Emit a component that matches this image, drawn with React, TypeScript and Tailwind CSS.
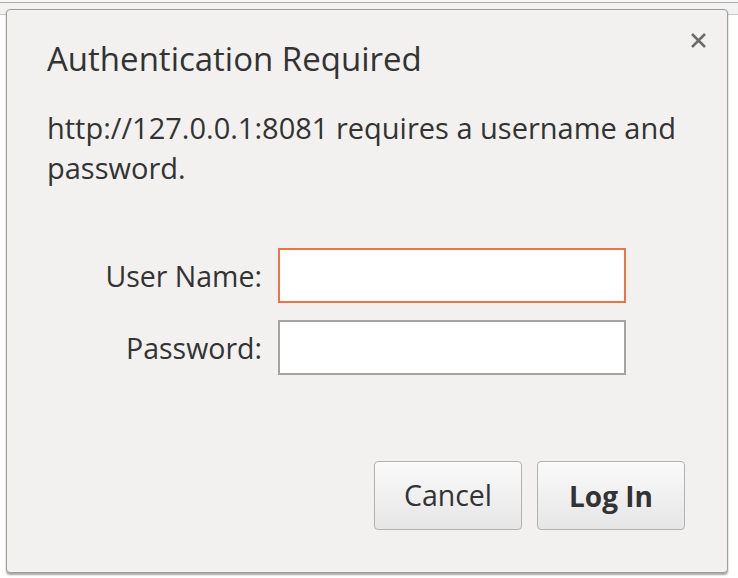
import { useState } from "react";

const font = { fontFamily: '"Open Sans", "Noto Sans", sans-serif' };

function CloseIcon() {
  return (
    <svg width="17" height="17" viewBox="0 0 17 17" className="block">
      <path d="M2 2 L15 15 M15 2 L2 15" stroke="#6b6b6b" strokeWidth="2.5" strokeLinecap="butt" />
    </svg>
  );
}

export default function App() {
  const [user, setUser] = useState("");
  const [pass, setPass] = useState("");

  return (
    <div className="relative h-[578px] w-[738px] overflow-hidden bg-white" style={font}>
      {/* browser chrome strip behind the dialog */}
      <div className="h-[15px] border-b border-[#c9c9c9] bg-[#f2f2f2]">
        <div className="h-[3px] border-b border-[#a9a9a9] bg-[#f7f7f7]" />
      </div>

      <div className="absolute left-[6px] top-[9px] flex h-[564px] w-[722px] flex-col rounded-[4px] border border-[#9d9d9d] bg-[#f2f1f0] shadow-[0_2px_2px_rgba(0,0,0,0.35)]">
        <button className="absolute right-[20px] top-[22px] p-0" aria-label="Close">
          <CloseIcon />
        </button>

        <h1 className="mt-[29px] pl-[40px] text-[33px] leading-[40px] font-normal text-[#333333]">
          Authentication Required
        </h1>

        <p className="mt-[29px] w-[690px] pl-[40px] text-[29px] leading-[40px] text-[#333333]">
          http://127.0.0.1:8081 requires a username and password.
        </p>

        <div className="mt-[60px] flex flex-col gap-[17px]">
          <div className="flex items-center">
            <label className="w-[271px] pr-4 text-right text-[28.5px] leading-[40px] text-[#333333]">
              User Name:
            </label>
            <input
              value={user}
              onChange={(e) => setUser(e.target.value)}
              className="h-[55px] w-[348px] border-2 border-[#ef7444] bg-white px-2 text-[24px] outline-none"
            />
          </div>
          <div className="flex items-center">
            <label className="w-[271px] pr-4 text-right text-[28.5px] leading-[40px] text-[#333333]">
              Password:
            </label>
            <input
              type="password"
              value={pass}
              onChange={(e) => setPass(e.target.value)}
              className="h-[55px] w-[348px] border-2 border-[#a3a3a3] bg-white px-2 text-[24px] outline-none"
            />
          </div>
        </div>

        <div className="mt-auto mb-[42px] flex justify-end gap-[15px] pr-[42px]">
          <button className="h-[69px] w-[148px] rounded-[4px] border border-[#b2b2b2] bg-gradient-to-b from-[#fafafa] to-[#e6e6e6] text-[28.5px] text-[#333333]">
            Cancel
          </button>
          <button className="h-[69px] w-[148px] rounded-[4px] border border-[#b2b2b2] bg-gradient-to-b from-[#fafafa] to-[#e6e6e6] text-[28px] font-bold text-[#333333]">
            Log In
          </button>
        </div>
      </div>
    </div>
  );
}
